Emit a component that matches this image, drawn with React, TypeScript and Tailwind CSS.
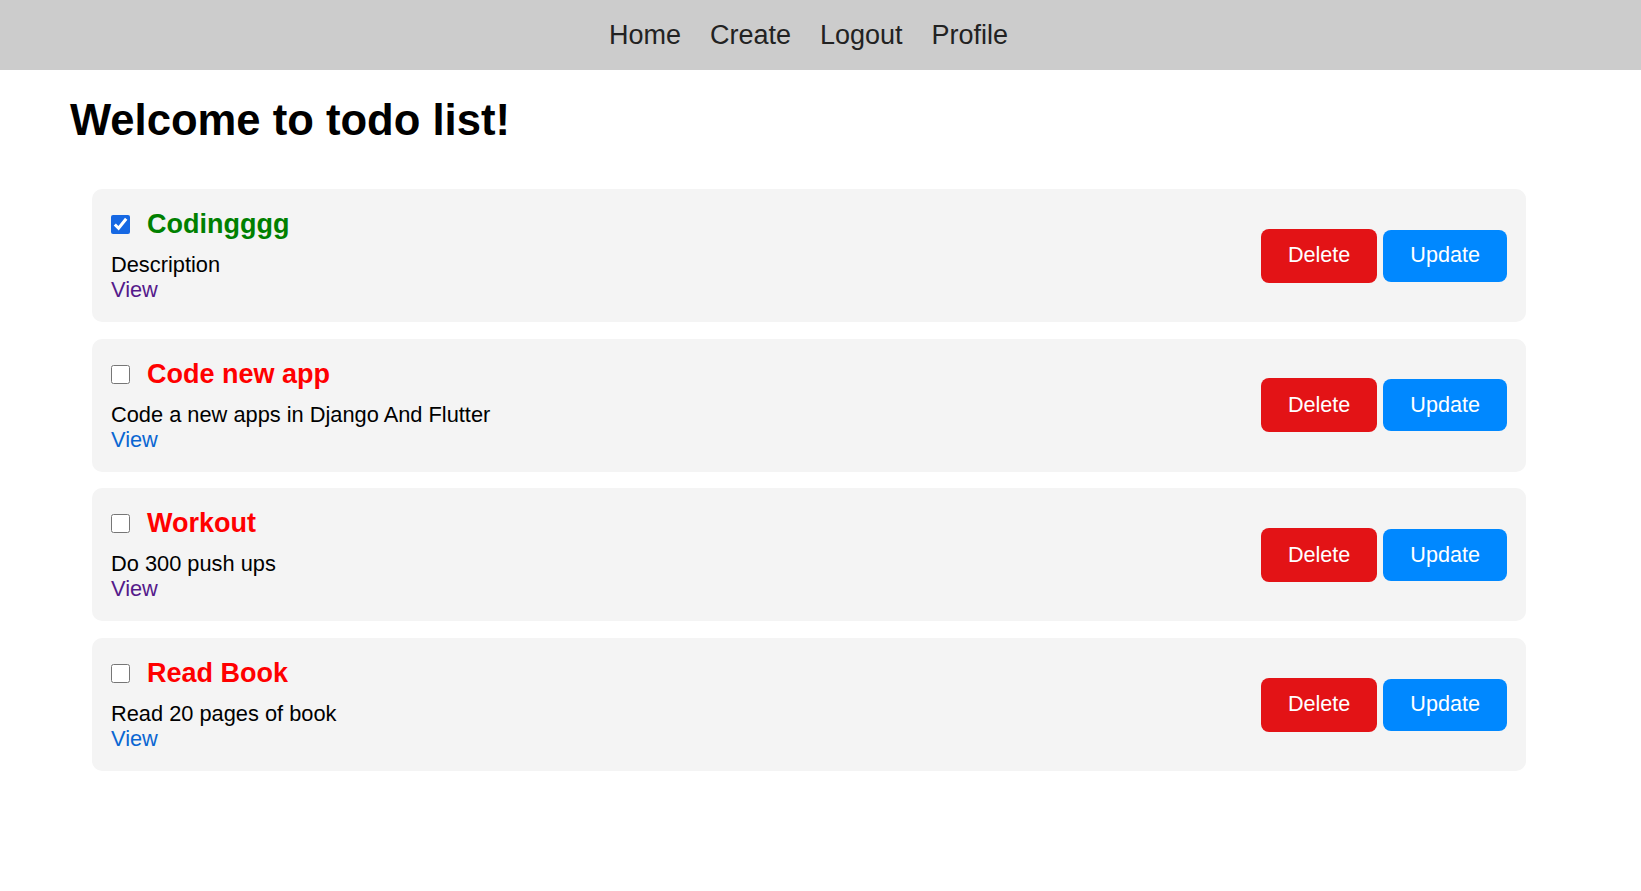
import { useState } from 'react'

type Todo = {
  id: number
  title: string
  description: string
  complete: boolean
  visited?: boolean
}

const initialTodos: Todo[] = [
  { id: 1, title: 'Codingggg', description: 'Description', complete: true, visited: true },
  { id: 2, title: 'Code new app', description: 'Code a new apps in Django And Flutter', complete: false },
  { id: 3, title: 'Workout', description: 'Do 300 push ups', complete: false, visited: true },
  { id: 4, title: 'Read Book', description: 'Read 20 pages of book', complete: false },
]

function NavBar() {
  return (
    <nav className="h-[70px] bg-[#cccccc] flex items-center justify-center gap-[29px] pr-[24px] text-[27px] text-[#222]">
      <a href="#">Home</a>
      <a href="#">Create</a>
      <a href="#">Logout</a>
      <a href="#">Profile</a>
    </nav>
  )
}

function TodoCard({ todo, onToggle }: { todo: Todo; onToggle: () => void }) {
  return (
    <div className="flex items-center justify-between bg-[#f4f4f4] rounded-[10px] pl-[19px] pr-[19px] pt-[20px] pb-[20px]">
      <div className="flex flex-col">
        <div className="flex items-center h-[31px] gap-[17px]">
          <input
            type="checkbox"
            checked={todo.complete}
            onChange={onToggle}
            className="m-0 w-[19px] h-[19px] accent-[#1668e3]"
          />
          <span
            className={
              todo.complete
                ? 'text-[27px] font-bold leading-[31px] text-[#008000]'
                : 'text-[27px] font-bold leading-[31px] text-[#ff0000]'
            }
          >
            {todo.title}
          </span>
        </div>
        <p className="mt-[12px] text-[21.8px] leading-[25px] text-black">{todo.description}</p>
        <a
          href="#"
          className={
            todo.visited
              ? 'text-[21.8px] leading-[25px] text-[#551a8b]'
              : 'text-[21.8px] leading-[25px] text-[#0a66d2]'
          }
        >
          View
        </a>
      </div>
      <div className="flex items-center gap-[6px]">
        <button className="h-[54px] px-[27px] rounded-[8px] bg-[#e31316] text-white text-[21.6px]">
          Delete
        </button>
        <button className="h-[52px] px-[27px] rounded-[8px] bg-[#0088ff] text-white text-[21.6px]">
          Update
        </button>
      </div>
    </div>
  )
}

export default function App() {
  const [todos, setTodos] = useState(initialTodos)

  const toggle = (id: number) =>
    setTodos(todos.map((t) => (t.id === id ? { ...t, complete: !t.complete } : t)))

  return (
    <div className="min-h-[891px] bg-white font-['Liberation_Sans',Arial,sans-serif]">
      <NavBar />
      <main className="px-[70px]">
        <h1 className="mt-[26px] text-[43.6px] font-bold leading-[49px] text-black">Welcome to todo list!</h1>
        <div className="mt-[44px] ml-[22px] w-[1434px] flex flex-col gap-[16.7px]">
          {todos.map((todo) => (
            <TodoCard key={todo.id} todo={todo} onToggle={() => toggle(todo.id)} />
          ))}
        </div>
      </main>
    </div>
  )
}
